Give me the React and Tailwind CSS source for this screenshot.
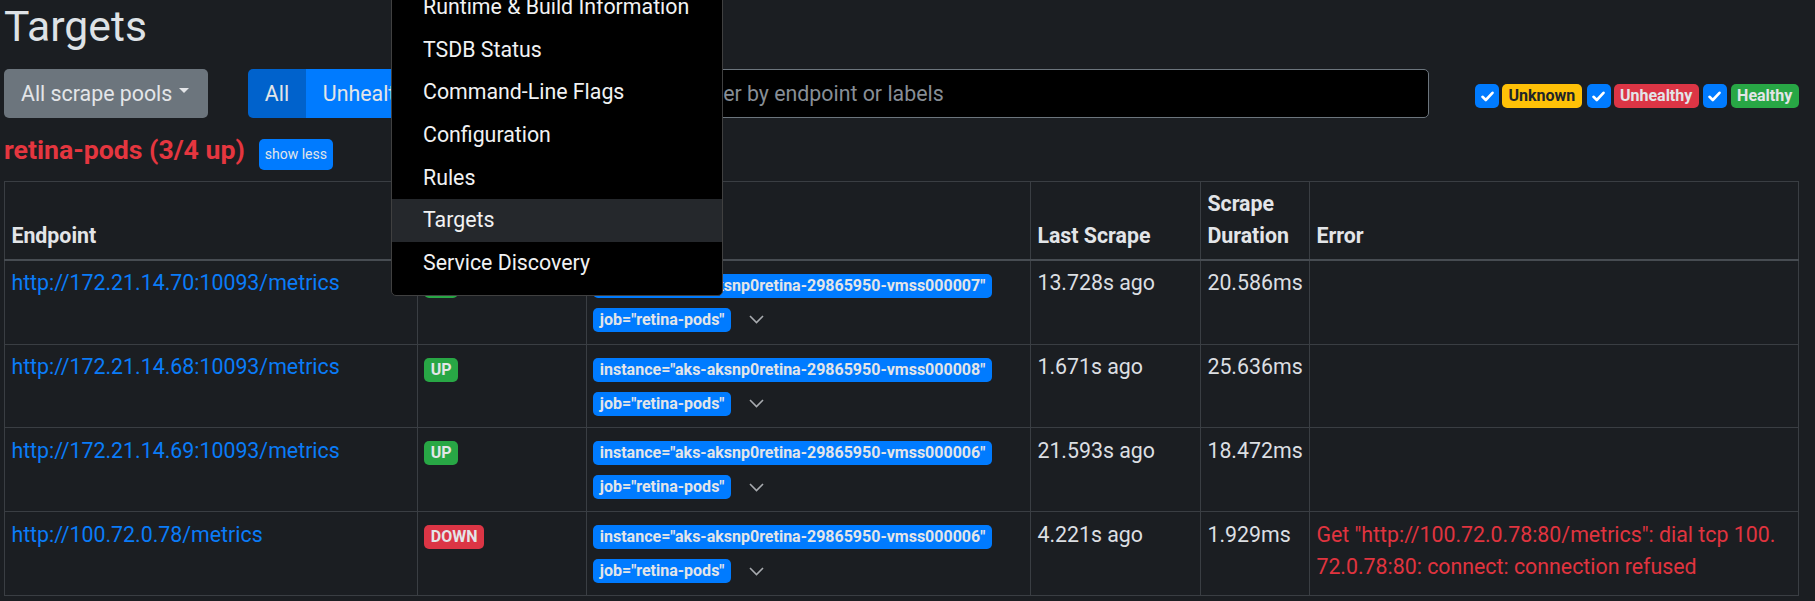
import React from "react";

const rows = [
  { ep: "http://172.21.14.70:10093/metrics", up: true, inst: "aks-aksnp0retina-29865950-vmss000007", last: "13.728s ago", dur: "20.586ms" },
  { ep: "http://172.21.14.68:10093/metrics", up: true, inst: "aks-aksnp0retina-29865950-vmss000008", last: "1.671s ago", dur: "25.636ms" },
  { ep: "http://172.21.14.69:10093/metrics", up: true, inst: "aks-aksnp0retina-29865950-vmss000006", last: "21.593s ago", dur: "18.472ms" },
  { ep: "http://100.72.0.78/metrics", up: false, inst: "aks-aksnp0retina-29865950-vmss000006", last: "4.221s ago", dur: "1.929ms", err: true },
];

function Check() {
  return (
    <span className="flex h-[24px] w-[24px] items-center justify-center rounded-[5px] bg-[#007bff]">
      <svg width="13" height="11" viewBox="0 0 13 11">
        <path d="M1.5 5.8 L4.8 9 L11.5 1.8" fill="none" stroke="#ffffff" strokeWidth="2.6" strokeLinecap="round" strokeLinejoin="round" />
      </svg>
    </span>
  );
}

function Chevron() {
  return (
    <svg width="15" height="9" viewBox="0 0 15 9" className="ml-[18px]">
      <polyline points="1,1 7.5,7.5 14,1" fill="none" stroke="#a8abaf" strokeWidth="1.6" />
    </svg>
  );
}

const menuItems = [
  "Runtime & Build Information",
  "TSDB Status",
  "Command-Line Flags",
  "Configuration",
  "Rules",
  "Targets",
  "Service Discovery",
];

export default function App() {
  return (
    <div className="relative h-[601px] w-[1815px] overflow-hidden bg-[#1b1e22] font-[Roboto,sans-serif] text-[#dee2e6]">
      <div className="pl-[4px]">
        <h2 className="pt-[1px] text-[42.67px] leading-[51px] text-[#dee2e6]">Targets</h2>

        <div className="mt-[17px] flex h-[49px] items-center">
          <div className="flex h-[49px] w-[204px] items-center rounded-[5px] bg-[#6c757d] pl-[17px] text-[21.33px] text-[#e3e5e8]">
            <span>All scrape pools</span>
            <span className="mb-[7px] ml-[7px] h-0 w-0 border-x-[5px] border-t-[5px] border-x-transparent border-t-[#e3e5e8]" />
          </div>
          <div className="ml-[40px] flex h-[49px] text-[21.33px] text-[#e3e5e8]">
            <span className="flex w-[58px] items-center justify-center rounded-l-[5px] bg-[#0062cc]">All</span>
            <span className="flex w-[128px] items-center justify-center bg-[#007bff]">Unhealthy</span>
            <span className="flex w-[155px] items-center justify-center rounded-r-[5px] bg-[#007bff]">Collapse All</span>
          </div>
          <input
            readOnly
            placeholder="Filter by endpoint or labels"
            className="ml-[88px] h-[49px] w-[752px] rounded-[5px] border border-[#6c757d] bg-black pl-[16px] text-[21.33px] text-[#dee2e6] outline-none placeholder:text-[#878e96]"
          />
          <div className="ml-[46px] mt-[5px] flex items-center text-[16px] font-bold">
            <Check />
            <span className="ml-[3px] flex h-[24px] items-center rounded-[5px] bg-[#ffc107] px-[6.4px] text-[#212529]">Unknown</span>
            <span className="ml-[5px]"><Check /></span>
            <span className="ml-[3px] flex h-[24px] items-center rounded-[5px] bg-[#dc3545] px-[6.4px] text-[#e3e5e8]">Unhealthy</span>
            <span className="ml-[4px]"><Check /></span>
            <span className="ml-[4px] flex h-[24px] items-center rounded-[5px] bg-[#28a745] px-[6.4px] text-[#e3e5e8]">Healthy</span>
          </div>
        </div>

        <div className="mt-[21px] flex h-[31px] items-start">
          <span className="mt-[-4px] text-[26.67px] font-bold leading-[31px] text-[#e5363f]">retina-pods (3/4 up)</span>
          <span className="ml-[14px] flex h-[31px] items-center rounded-[5px] bg-[#007bff] px-[6px] text-[14px] text-[#e3e5e8]">show less</span>
        </div>

        <table className="mt-[11px] w-[1795px] table-fixed border-collapse text-[21.33px] leading-[32px]">
          <thead>
            <tr className="text-left font-bold text-[#e3e5e8]">
              <th className="w-[413px] border border-b-2 border-[#3a3e43] border-b-[#474c52] px-[6.4px] py-[6.4px] align-bottom">Endpoint</th>
              <th className="w-[169px] border border-b-2 border-[#3a3e43] border-b-[#474c52] px-[6.4px] py-[6.4px] align-bottom">State</th>
              <th className="w-[444px] border border-b-2 border-[#3a3e43] border-b-[#474c52] px-[6.4px] py-[6.4px] align-bottom">Labels</th>
              <th className="w-[170px] border border-b-2 border-[#3a3e43] border-b-[#474c52] px-[6.4px] py-[6.4px] align-bottom">Last Scrape</th>
              <th className="w-[109px] border border-b-2 border-[#3a3e43] border-b-[#474c52] px-[6.4px] py-[6.4px] align-bottom">Scrape Duration</th>
              <th className="w-[489px] border border-b-2 border-[#3a3e43] border-b-[#474c52] px-[6.4px] py-[6.4px] align-bottom">Error</th>
            </tr>
          </thead>
          <tbody className="text-[#dcdfe2]">
            {rows.map((r, i) => (
              <tr key={i}>
                <td className="border border-[#3a3e43] px-[6.4px] py-[6.4px] align-top">
                  <span className="text-[#0a7cf8]">{r.ep}</span>
                </td>
                <td className="border border-[#3a3e43] px-[6.4px] py-[6.4px] align-top">
                  <div className="flex">
                    {r.up ? (
                      <span className="mt-[6.6px] flex h-[24px] items-center rounded-[5px] bg-[#28a745] px-[6.4px] text-[16px] font-bold leading-[16px] text-[#e3e5e8]">UP</span>
                    ) : (
                      <span className="mt-[6.6px] flex h-[24px] items-center rounded-[5px] bg-[#dc3545] px-[6.4px] text-[16px] font-bold leading-[16px] text-[#e3e5e8]">DOWN</span>
                    )}
                  </div>
                </td>
                <td className="border border-[#3a3e43] px-[6.4px] py-[6.4px] align-top">
                  <div className="flex h-[70px] flex-col items-start text-[16px] font-bold leading-[16px] text-[#e3e5e8]">
                    <span className="mt-[6.6px] flex h-[24px] items-center rounded-[5px] bg-[#007bff] px-[6.4px] whitespace-nowrap">
                      instance="{r.inst}"
                    </span>
                    <div className="mt-[10px] flex items-center">
                      <span className="flex h-[24px] items-center rounded-[5px] bg-[#007bff] px-[6.4px] whitespace-nowrap">job="retina-pods"</span>
                      <Chevron />
                    </div>
                  </div>
                </td>
                <td className="border border-[#3a3e43] px-[6.4px] py-[6.4px] align-top whitespace-nowrap">{r.last}</td>
                <td className="border border-[#3a3e43] px-[6.4px] py-[6.4px] align-top whitespace-nowrap">{r.dur}</td>
                <td className="border border-[#3a3e43] px-[6.4px] py-[6.4px] align-top text-[#e0343f]">
                  {r.err ? (
                    <div className="whitespace-nowrap">
                      <div>Get "http://100.72.0.78:80/metrics": dial tcp 100.</div>
                      <div>72.0.78:80: connect: connection refused</div>
                    </div>
                  ) : null}
                </td>
              </tr>
            ))}
          </tbody>
        </table>
      </div>

      <div className="absolute left-[391px] top-[-26px] w-[332px] rounded-[5px] border border-[#404040] bg-black py-[10.67px] text-[21.33px] leading-[32px] text-[#f1f2f3]">
        {menuItems.map((m) =>
          m === "Targets" ? (
            <div key={m} className="bg-[#25282c] px-[31px] py-[5.33px]">{m}</div>
          ) : (
            <div key={m} className="px-[31px] py-[5.33px]">{m}</div>
          )
        )}
      </div>
    </div>
  );
}
